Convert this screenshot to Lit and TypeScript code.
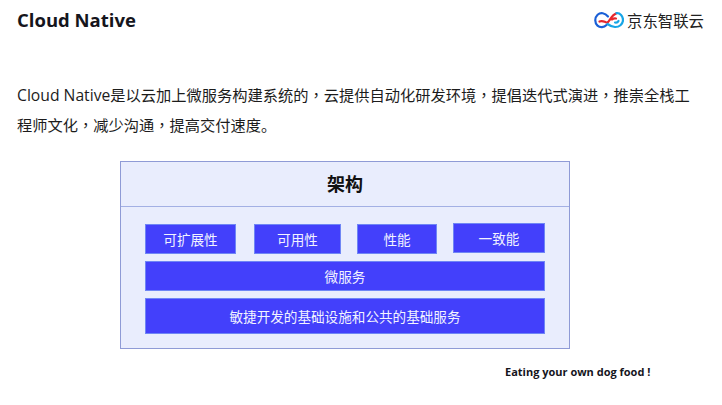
import { LitElement, html, css } from "lit";
import { customElement } from "lit/decorators.js";

@customElement("app-root")
export class AppRoot extends LitElement {
  static styles = css`
    :host {
      display: block;
      width: 722px;
      height: 405px;
      background: #fff;
      overflow: hidden;
      font-family: "Open Sans", "Noto Sans CJK SC", sans-serif;
      color: #111;
    }
    .head {
      display: flex;
      justify-content: space-between;
      align-items: flex-start;
      height: 80px;
      padding: 7px 18px 0 17px;
      box-sizing: border-box;
    }
    .title { font-size: 18.5px; font-weight: 700; line-height: 25px; color: #15151c; }
    .logo { display: flex; align-items: center; gap: 3px; margin-top: 3px; }
    .logo span { font-family: "Noto Sans CJK SC", sans-serif; font-size: 15.4px; line-height: 20px; color: #222; }
    .intro {
      margin: 0;
      padding: 0 27px 0 17px;
      font-family: "Noto Sans CJK SC", sans-serif;
      font-size: 15.26px;
      line-height: 29px;
      height: 66px;
      color: #1c1c1c;
      text-spacing-trim: space-all;
    }
    .latin { font-family: "Open Sans", sans-serif; font-size: 15.7px; }
    .c { font-family: "Noto Sans CJK TC", sans-serif; }
    .arch {
      box-sizing: border-box;
      width: 450px;
      height: 188px;
      margin: 15px 0 0 120px;
      background: #e9edfd;
      border: 1px solid #8f9bd6;
    }
    .arch h2 {
      margin: 0;
      height: 45px;
      box-sizing: border-box;
      border-bottom: 1px solid #a3b0e4;
      text-align: center;
      font-size: 18px;
      font-weight: 700;
      line-height: 43px;
      color: #111;
      font-family: "Noto Sans CJK SC", sans-serif;
    }
    .body {
      display: flex;
      flex-direction: column;
      gap: 7px;
      padding: 17px 24px 0;
    }
    .row { display: flex; height: 30px; gap: 18px; }
    .b {
      display: flex;
      align-items: center;
      justify-content: center;
      box-sizing: border-box;
      background: #4340fb;
      border: 1px solid #6f86f5;
      color: #f2f3ff;
      font-family: "Noto Sans CJK SC", sans-serif;
      font-size: 13.6px;
    }
    .w1 { width: 91px; }
    .w2 { width: 87px; }
    .w3 { width: 80px; margin-left: -2px; }
    .w4 { width: 92px; margin-left: -2px; transform: translateY(-1px); }
    .full { height: 30px; }
    .tall { height: 36px; }
    .foot {
      margin: 14px 0 0 505px;
      font-size: 11px;
      font-weight: 700;
      line-height: 18px;
      color: #15151c;
    }
  `;

  render() {
    const c = html`<span class="c">，</span>`;
    return html`
      <div class="head">
        <div class="title">Cloud Native</div>
        <div class="logo">
          <svg width="30" height="18" viewBox="0 0 30 18" fill="none" stroke-width="2.2" stroke-linecap="round">
            <path d="M14 5.5C11 1.8 6.5 1.2 3.6 3.8C0.4 6.8 0.6 12 3.5 14.6C6 16.8 10 16.5 12.5 14" stroke="#1a5fd6"></path>
            <path d="M5.5 10.5C8.5 9 10.5 11 12.5 11.5C16 12 16 4.5 22.5 2.2" stroke="#e5262c"></path>
            <path d="M18 8.5C19 7.6 20.5 7.2 22 7.5" stroke="#e5262c"></path>
            <path d="M22.5 2.2C26 1.8 29 5 29 9C29 13.5 25 16.2 21 16C18 15.8 15.5 14.5 13.5 13" stroke="#17a5e6"></path>
            <path d="M21 11.5C22.5 11.8 24 11 24.5 10" stroke="#17a5e6"></path>
          </svg>
          <span>京东智联云</span>
        </div>
      </div>
      <p class="intro"><span class="latin">Cloud Native</span>是以云加上微服务构建系统的${c}云提供自动化研发环境${c}提倡迭代式演进${c}推崇全栈工程师文化${c}减少沟通${c}提高交付速度。</p>
      <section class="arch">
        <h2>架构</h2>
        <div class="body">
          <div class="row">
            <div class="b w1">可扩展性</div>
            <div class="b w2">可用性</div>
            <div class="b w3">性能</div>
            <div class="b w4">一致能</div>
          </div>
          <div class="b full">微服务</div>
          <div class="b tall">敏捷开发的基础设施和公共的基础服务</div>
        </div>
      </section>
      <div class="foot">Eating your own dog food !</div>
    `;
  }
}
